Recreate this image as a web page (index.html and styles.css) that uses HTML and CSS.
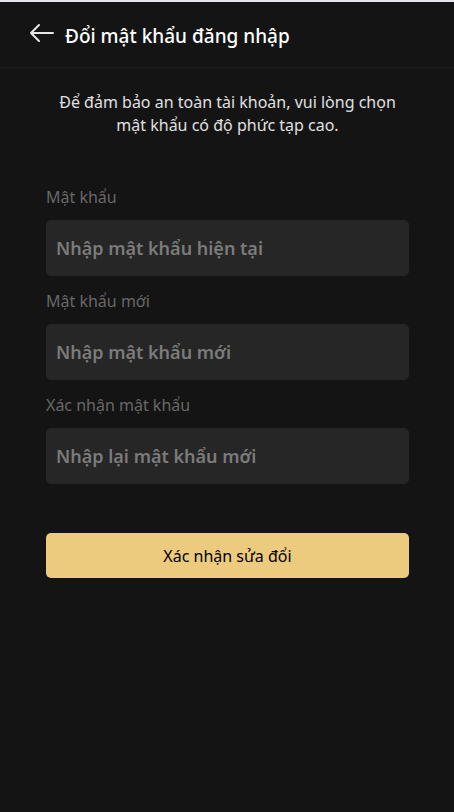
FILE: index.html
```html
<!DOCTYPE html>
<html lang="vi">
<head>
<meta charset="utf-8">
<link rel="stylesheet" href="styles.css">
</head>
<body>
<div class="topline"></div>
<div class="page">
  <header class="header">
    <span class="back">
      <svg width="26" height="20" viewBox="0 0 26 20"><path d="M11 2 L3 10 L11 18 M3 10 H25" fill="none" stroke="#e6e6e6" stroke-width="2" stroke-linecap="round" stroke-linejoin="round"/></svg>
    </span>
    <h1 class="title">Đổi mật khẩu đăng nhập</h1>
  </header>
  <main class="content">
    <p class="desc">Để đảm bảo an toàn tài khoản, vui lòng chọn mật khẩu có độ phức tạp cao.</p>
    <form class="form">
      <label class="label">Mật khẩu</label>
      <div class="field">Nhập mật khẩu hiện tại</div>
      <label class="label">Mật khẩu mới</label>
      <div class="field">Nhập mật khẩu mới</div>
      <label class="label">Xác nhận mật khẩu</label>
      <div class="field">Nhập lại mật khẩu mới</div>
      <div class="btn">Xác nhận sửa đổi</div>
    </form>
  </main>
</div>
</body>
</html>
```
FILE: styles.css
```css
html, body { margin: 0; padding: 0; height: 100%; }
body { background: #141414; font-family: "Noto Sans", "Open Sans", sans-serif; }
.topline { height: 2px; background: #e4e6ea; }
.page { background: #141414; min-height: 810px; }
.header { height: 66px; box-sizing: border-box; display: flex; align-items: center; padding-left: 28px; padding-top: 2px; border-bottom: 1px solid #1c1c1c; }
.back { display: flex; width: 26px; height: 20px; margin-right: 11px; margin-top: -6px; }
.title { margin: 0; font-size: 19px; font-weight: 500; color: #ffffff; }
.content { padding: 0 45px 0 46px; }
.desc { margin: 23px 0 0; text-align: center; color: #e0e0e0; font-size: 16px; line-height: 23px; }
.form { display: flex; flex-direction: column; margin-top: 49px; }
.label { color: #686868; font-size: 16px; line-height: 22px; margin-bottom: 12px; }
.field { height: 56px; background: #262626; border-radius: 5px; display: flex; align-items: center; padding-left: 10px; color: #7b7b7b; font-size: 18px; font-weight: 600; margin-bottom: 14px; }
.btn { margin-top: 35px; height: 45px; background: #ecca7e; border-radius: 5px; display: flex; align-items: center; justify-content: center; color: #000; font-size: 16px; }
```
